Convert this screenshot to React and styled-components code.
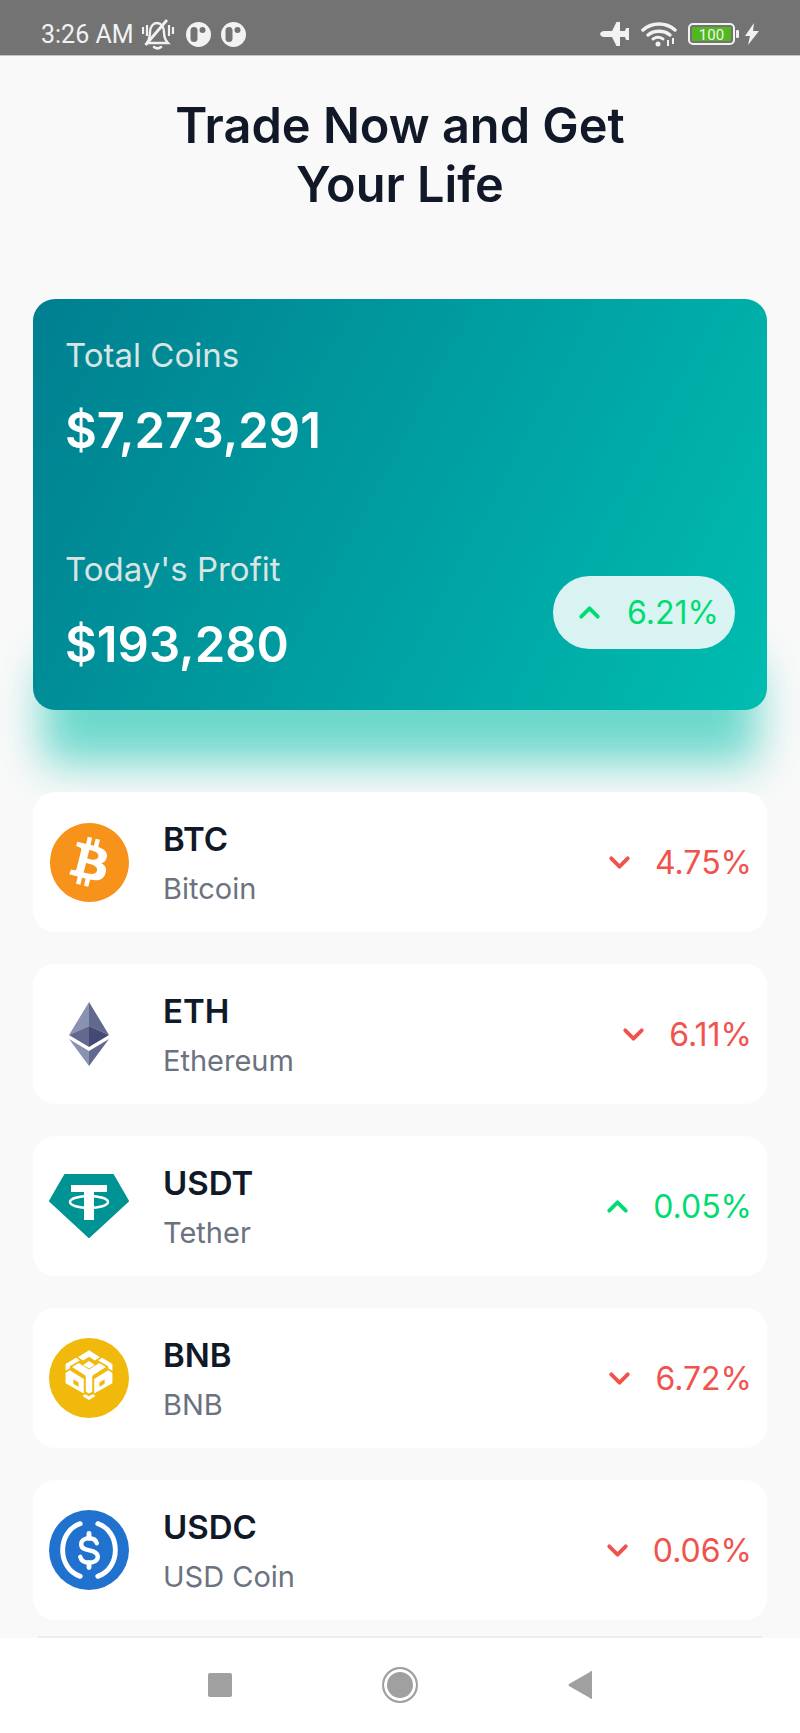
import styled, { createGlobalStyle } from "styled-components"
import { SiBitcoin } from "react-icons/si"
import { ChevronDown, ChevronUp } from "lucide-react"

const GlobalStyle = createGlobalStyle`
html, body {
  margin: 0;
  padding: 0;
  background: #f9f9f9;
}
* {
  box-sizing: border-box;
}
`;

const Screen = styled.div`
display: flex;
flex-direction: column;
width: 800px;
height: 1733px;
overflow: hidden;
background: #f9f9f9;
font-family: Inter, "Liberation Sans", sans-serif;
`;

const StatusBar = styled.div`
display: flex;
justify-content: space-between;
align-items: center;
height: 56px;
flex-shrink: 0;
padding: 13px 41px 0 41px;
background: #737373;
border-bottom: 1px solid #c4c4c4;
`;

const StatusGroup = styled.div`
display: flex;
align-items: center;
gap: ${props => props.gap}px;
`;

const Clock = styled.span`
font-family: Roboto, sans-serif;
font-size: 25px;
color: #f2f2f2;
margin-right: -2px;
`;

const Main = styled.div`
flex: 1;
display: flex;
flex-direction: column;
padding: 0 33px;
`;

const Title = styled.h1`
margin: 40px 0 85px;
text-align: center;
font-size: 48.7px;
line-height: 59px;
font-weight: 600;
color: #111827;
`;

const BalanceCard = styled.div`
position: relative;
display: flex;
flex-direction: column;
gap: 87px;
height: 411px;
padding: 34px 32px 0 32px;
border-radius: 22px;
margin-bottom: 82px;
&::before {
  content: "";
  position: absolute;
  z-index: 0;
  left: 10px;
  right: 10px;
  top: 364px;
  height: 100px;
  background: rgba(0, 190, 170, 0.56);
  filter: blur(22px);
}
&::after {
  content: "";
  position: absolute;
  z-index: 0;
  inset: 0;
  border-radius: 22px;
  background: linear-gradient(118deg, #007f90 0%, #00bdb0 100%);
}
`;

const StatRow = styled.div`
position: relative;
z-index: 1;
display: flex;
justify-content: space-between;
align-items: flex-end;
`;

const Stat = styled.div`
display: flex;
flex-direction: column;
gap: 25px;
`;

const StatLabel = styled.span`
font-size: 33px;
line-height: 44px;
color: #d9e4e3;
`;

const StatValue = styled.span`
font-size: 49px;
line-height: 58px;
font-weight: 600;
color: #ffffff;
`;

const ProfitPill = styled.div`
display: flex;
align-items: center;
justify-content: flex-end;
gap: 21px;
width: 182px;
height: 73px;
padding-right: 16px;
margin-bottom: 25px;
border-radius: 37px;
background: rgba(255, 255, 255, 0.85);
`;

const Percent = styled.span`
font-size: 32px;
color: ${props => props.up ? "#00dc72" : "#f0524c"};
`;

const CoinList = styled.div`
position: relative;
z-index: 1;
display: flex;
flex-direction: column;
gap: 32px;
`;

const CoinRow = styled.div`
display: flex;
align-items: center;
height: 140px;
padding: 0 15px 0 16px;
border-radius: 22px;
background: #ffffff;
`;

const CoinIcon = styled.div`
display: flex;
align-items: center;
justify-content: center;
width: 80px;
height: 80px;
flex-shrink: 0;
margin-right: 34px;
`;

const CoinText = styled.div`
flex: 1;
display: flex;
flex-direction: column;
gap: 10px;
margin-top: 3px;
`;

const Symbol = styled.span`
font-size: 33px;
line-height: 40px;
font-weight: 600;
color: #111827;
`;

const CoinName = styled.span`
font-size: 29px;
line-height: 40px;
color: #6b7280;
`;

const Change = styled.div`
display: flex;
align-items: center;
gap: 19px;
`;

const NavDivider = styled.div`
height: 2px;
margin: 0 38px;
background: #ededed;
flex-shrink: 0;
`;

const NavBar = styled.div`
display: flex;
justify-content: center;
align-items: center;
gap: 150px;
height: 95px;
padding-bottom: 1px;
flex-shrink: 0;
background: #ffffff;
`;

const NavSquare = styled.div`
width: 24px;
height: 24px;
border-radius: 2px;
background: #a0a0a0;
`;

const NavCircle = styled.div`
width: 36px;
height: 36px;
border-radius: 50%;
border: 2px solid #a0a0a0;
background: #a0a0a0;
box-shadow: inset 0 0 0 3px #ffffff;
`;

const BoltSvg = styled.svg`
margin-left: -5px;
`;

const BellIcon = () => (
  <svg width="34" height="40" viewBox="0 0 34 40" fill="none" stroke="#f2f2f2">
    <path d="M5 29h21c-3-3-4-6-4-11 0-5-3-9-7-9s-7 4-7 9c0 5-1 8-3 11z" strokeWidth="2.4" />
    <path d="M12 33c2 1.500 5 1.500 7 0" strokeWidth="2.6" strokeLinecap="round" />
    <path d="M3.500 31L25 6" strokeWidth="2.8" />
    <path d="M1 13v7M5 11v11M27 11v11M31 13v7" strokeWidth="2.2" />
  </svg>
)

const AppBadge = () => (
  <svg width="25" height="25" viewBox="0 0 25 25">
    <circle cx="12.500" cy="12.500" r="12.500" fill="#f2f2f2" />
    <rect x="4.500" y="5" width="7" height="15" rx="3.500" fill="#737373" />
    <circle cx="16.500" cy="8" r="3" fill="#737373" />
  </svg>
)

const PlaneIcon = () => (
  <svg width="30" height="26" viewBox="0 0 30 26" fill="#f2f2f2">
    <path d="M0 13c0-1.500 2-3 4-3h8L16.500 1h3.500v9h5l1-3h3v12h-3l-1-3h-5v9h-3.500L12 16H4c-2 0-4-1.500-4-3z" />
  </svg>
)

const WifiIcon = () => (
  <svg width="36" height="26" viewBox="0 0 36 26" fill="none" stroke="#f2f2f2" strokeLinecap="round">
    <path d="M2 9c9-8 23-8 32 0" strokeWidth="3.500" />
    <path d="M7 14c6-5 16-5 22 0" strokeWidth="3.500" />
    <path d="M12 18c3-2 7-2 10 0" strokeWidth="3" />
    <circle cx="17" cy="23" r="2.500" fill="#f2f2f2" stroke="none" />
    <path d="M27 19v6M32 17v6" strokeWidth="2" strokeLinecap="butt" />
  </svg>
)

const BatteryIcon = () => (
  <svg width="51" height="22" viewBox="0 0 51 22">
    <rect x="1" y="1" width="45" height="20" rx="4" fill="none" stroke="#f2f2f2" strokeWidth="2" />
    <rect x="4" y="4" width="39" height="14" rx="1" fill="#52b81f" />
    <rect x="48" y="7" width="3" height="8" rx="1" fill="#f2f2f2" />
    <text x="23.500" y="17" textAnchor="middle" fontFamily="Roboto, sans-serif" fontSize="15" fill="#f2f2f2">100</text>
  </svg>
)

const BoltIcon = () => (
  <BoltSvg width="14" height="22" viewBox="0 0 14 22" fill="#f2f2f2">
    <path d="M9 0L0 13h5l-2 9 11-14H8z" />
  </BoltSvg>
)

const EthIcon = () => (
  <svg width="40" height="64" viewBox="0 0 40 64">
    <polygon points="20,0 0,33 20,24" fill="#8a92b2" />
    <polygon points="20,0 40,33 20,24" fill="#62688f" />
    <polygon points="20,24 0,33 20,45" fill="#62688f" />
    <polygon points="20,24 40,33 20,45" fill="#454a75" />
    <polygon points="0,37 20,49 20,64" fill="#8a92b2" />
    <polygon points="40,37 20,49 20,64" fill="#62688f" />
  </svg>
)

const TetherIcon = () => (
  <svg width="80" height="64" viewBox="0 0 80 64">
    <polygon points="16,1 64,1 79,27 40,63 1,27" fill="#009393" stroke="#009393" strokeWidth="2" strokeLinejoin="round" />
    <rect x="22" y="11" width="36" height="7" fill="#ffffff" />
    <rect x="35" y="11" width="10" height="35" fill="#ffffff" />
    <ellipse cx="40" cy="28" rx="19" ry="6" fill="none" stroke="#ffffff" strokeWidth="2.5" />
  </svg>
)

const BnbIcon = () => (
  <svg width="82" height="82" viewBox="12 10 246 246">
    <circle cx="135" cy="133" r="123" fill="#f0b90b" />
    <g fill="#ffffff" transform="translate(3 3)">
      <polygon points="132,45 166,66 150,76 132,65 114,76 98,66" />
      <polygon points="132,78 150,90 132,101 114,90" />
      <polygon points="92,68 60,87 60,108 73,100 73,94 104,76" />
      <polygon points="172,68 204,87 204,108 191,100 191,94 160,76" />
      <polygon points="100,84 132,104 164,84 184,96 142,123 142,172 132,178 122,172 122,123 80,96" />
      <path fillRule="evenodd" d="M60 114L73 106L116 133V178L60 146ZM84 134L100 144V158L84 148Z" />
      <path fillRule="evenodd" d="M204 114L191 106L148 133V178L204 146ZM180 134L164 144V158L180 148Z" />
      <polygon points="120,180 132,186 144,180 152,185 132,198 112,185" />
    </g>
  </svg>
)

const UsdcIcon = () => (
  <svg width="82" height="82" viewBox="0 0 82 82">
    <circle cx="41" cy="41" r="41" fill="#2172cf" />
    <path d="M32 14C8 22 8 60 32 68" fill="none" stroke="#ffffff" strokeWidth="5" strokeLinecap="round" />
    <path d="M50 14c24 8 24 46 0 54" fill="none" stroke="#ffffff" strokeWidth="5" strokeLinecap="round" />
    <path d="M49 34c-1-3-4-5-8-5s-8 2-8 6c0 9 17 4 17 13 0 4-4 6-9 6s-8-2-9-6" fill="none" stroke="#ffffff" strokeWidth="4.500" strokeLinecap="round" />
    <path d="M41 24v5M41 54v5" stroke="#ffffff" strokeWidth="5" strokeLinecap="round" />
  </svg>
)

const NavBack = () => (
  <svg width="25" height="28" viewBox="0 0 25 28" fill="#a0a0a0">
    <path d="M24 1v26a1 1 0 0 1-2 0L1 15a1.500 1.500 0 0 1 0-2L22 1a1 1 0 0 1 2 0z" />
  </svg>
)

const coins = [
  { symbol: "BTC", name: "Bitcoin", change: "4.75%", up: false, icon: <SiBitcoin size={79} color="#f7931a" /> },
  { symbol: "ETH", name: "Ethereum", change: "6.11%", up: false, icon: <EthIcon /> },
  { symbol: "USDT", name: "Tether", change: "0.05%", up: true, icon: <TetherIcon /> },
  { symbol: "BNB", name: "BNB", change: "6.72%", up: false, icon: <BnbIcon /> },
  { symbol: "USDC", name: "USD Coin", change: "0.06%", up: false, icon: <UsdcIcon /> },
]

const App = () => {
  return <Screen>
    <GlobalStyle />
    <StatusBar>
      <StatusGroup gap={10}>
        <Clock>3:26 AM</Clock>
        <BellIcon />
        <AppBadge />
        <AppBadge />
      </StatusGroup>
      <StatusGroup gap={11}>
        <PlaneIcon />
        <WifiIcon />
        <BatteryIcon />
        <BoltIcon />
      </StatusGroup>
    </StatusBar>
    <Main>
      <Title>Trade Now and Get<br />Your Life</Title>
      <BalanceCard>
        <StatRow>
          <Stat>
            <StatLabel>Total Coins</StatLabel>
            <StatValue>$7,273,291</StatValue>
          </Stat>
        </StatRow>
        <StatRow>
          <Stat>
            <StatLabel>Today's Profit</StatLabel>
            <StatValue>$193,280</StatValue>
          </Stat>
          <ProfitPill>
            <ChevronUp size={33} color="#00dc72" strokeWidth={2.8} />
            <Percent up>6.21%</Percent>
          </ProfitPill>
        </StatRow>
      </BalanceCard>
      <CoinList>
        {coins.map(coin => (
          <CoinRow key={coin.symbol}>
            <CoinIcon>{coin.icon}</CoinIcon>
            <CoinText>
              <Symbol>{coin.symbol}</Symbol>
              <CoinName>{coin.name}</CoinName>
            </CoinText>
            <Change>
              {coin.up
                ? <ChevronUp size={33} color="#00dc72" strokeWidth={2.8} />
                : <ChevronDown size={33} color="#f0524c" strokeWidth={2.8} />}
              <Percent up={coin.up}>{coin.change}</Percent>
            </Change>
          </CoinRow>
        ))}
      </CoinList>
    </Main>
    <NavDivider />
    <NavBar>
      <NavSquare />
      <NavCircle />
      <NavBack />
    </NavBar>
  </Screen>
}

export default App
